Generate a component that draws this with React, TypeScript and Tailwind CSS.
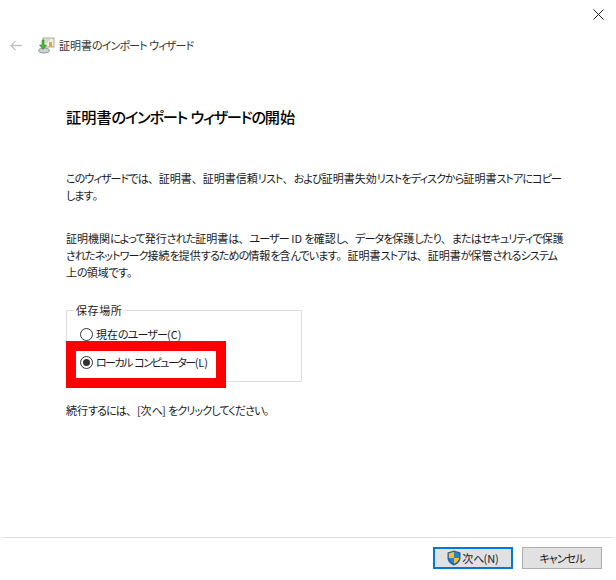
// the reference font has narrow kana next to full width kanji, so kana runs get squeezed
function T({ children, tight }: { children: string; tight?: boolean }) {
  const parts = children.split(/([\u3040-\u30ff]+)/);
  return (
    <>
      {parts.map((p, i) =>
        i % 2 === 1 ? (
          <span key={i} className={`[font-feature-settings:'palt'] ${tight ? 'tracking-[-0.14em]' : 'tracking-[-0.08em]'}`}>{p}</span>
        ) : (
          <span key={i}>{p}</span>
        )
      )}
    </>
  );
}

function BackArrow() {
  return (
    <svg width="12" height="11" viewBox="0 0 12 11" fill="none" stroke="#c4c4c4" strokeWidth="1.4">
      <path d="M12 5.500H1M5.500 1 1 5.500 5.500 10" />
    </svg>
  );
}

function CertIcon() {
  return (
    <svg width="17" height="17" viewBox="0 0 17 17">
      <rect x="5" y="1" width="11" height="9" fill="#f1efe4" stroke="#a9a69a" />
      <rect x="11" y="5" width="3" height="5" fill="#e8a33a" />
      <path d="M6 3h6M6 5h4" stroke="#c4c1b4" />
      <ellipse cx="6" cy="13.5" rx="5.500" ry="2.500" fill="#cfd2d2" stroke="#8d9292" />
      <path d="M6 3v5h2.500L5 12.500 1.500 8H4V3z" fill="#47b53c" stroke="#2c8a2a" strokeWidth="0.6" />
    </svg>
  );
}

function ShieldIcon() {
  return (
    <svg width="14" height="16" viewBox="0 0 14 16">
      <path d="M7 .5 13.500 2.500V8c0 3.500-3 6-6.500 7.500C3.500 14 .5 11.500.5 8V2.500z" fill="#2b5f9e" />
      <path d="M7 1.800V8H1.800V3.400z" fill="#f7c325" />
      <path d="M7 8h5.200c-.2 2.500-2.500 4.500-5.200 5.800z" fill="#f7c325" />
      <path d="M7 1.800 12.200 3.400V8H7z" fill="#2f7fd1" />
      <path d="M7 8v5.800C4.300 12.500 2 10.500 1.800 8z" fill="#2f7fd1" />
    </svg>
  );
}

function Radio({ checked, label }: { checked?: boolean; label: string }) {
  return (
    <div className="flex items-center gap-[3px] h-[17px]">
      <span className="w-[13px] h-[13px] rounded-full border border-[#333] flex items-center justify-center bg-white">
        {checked && <span className="w-[7px] h-[7px] rounded-full bg-[#333]" />}
      </span>
      <span><T tight={checked}>{label}</T></span>
    </div>
  );
}

export default function App() {
  return (
    <main className="font-['Noto_Sans_CJK_JP','Noto_Sans',sans-serif] relative w-[616px] h-[580px] bg-white text-[11px] leading-[17px] text-[#1a1a1a] flex flex-col overflow-hidden">
      <div className="flex justify-end pt-[9px] pr-[12px] h-[36px]">
        <svg width="11" height="11" viewBox="0 0 11 11">
          <path d="M.5.500l10 10M10.500.500l-10 10" stroke="#222" fill="none" />
        </svg>
      </div>

      <div className="flex items-center h-[18px] pl-[10px]">
        <BackArrow />
        <span className="ml-[16px]"><CertIcon /></span>
        <span className="ml-[4px] text-[#333] whitespace-nowrap"><T>証明書のインポート ウィザード</T></span>
      </div>

      <div className="pl-[66px] flex-1 whitespace-nowrap">
        <h1 className="mt-[52px] text-[15.2px] leading-[20px] font-medium text-black"><T>証明書のインポート ウィザードの開始</T></h1>

        <p className="mt-[44px]">
          <T>このウィザードでは、証明書、証明書信頼リスト、および証明書失効リストをディスクから証明書ストアにコピー</T><br />
          <T>します。</T>
        </p>
        <p className="mt-[26px]">
          <T>証明機関によって発行された証明書は、ユーザー ID を確認し、データを保護したり、またはセキュリティで保護</T><br />
          <T>されたネットワーク接続を提供するための情報を含んでいます。証明書ストアは、証明書が保管されるシステム</T><br />
          <T>上の領域です。</T>
        </p>

        <fieldset className="mt-[21px] w-[236px] h-[80px] border border-[#dcdcdc] pl-[13px] pt-[8px]">
          <legend className="px-[2px] -ml-[6px] leading-[16px] tracking-[0.6px]">保存場所</legend>
          <div className="flex flex-col gap-[11px]">
            <Radio label="現在のユーザー(C)" />
            <Radio checked label="ローカル コンピューター(L)" />
          </div>
        </fieldset>

        <p className="mt-[20px]"><T>続行するには、[次へ] をクリックしてください。</T></p>
      </div>

      <footer className="mx-[2px] h-[43px] border-t border-[#dfdfdf] flex justify-end gap-[9px] pt-[9px] pr-[12px]">
        <button className="w-[80px] h-[22px] bg-[#e1e1e1] border-2 border-[#0078d7] flex items-center justify-center gap-[1px]">
          <ShieldIcon />
          <span><T>次へ(N)</T></span>
        </button>
        <button className="w-[80px] h-[22px] bg-[#e1e1e1] border border-[#adadad]"><T>キャンセル</T></button>
      </footer>

      <div className="absolute left-[66px] top-[341px] w-[160px] h-[47px] border-[10px] border-[#ff0000] pointer-events-none" />
    </main>
  );
}
